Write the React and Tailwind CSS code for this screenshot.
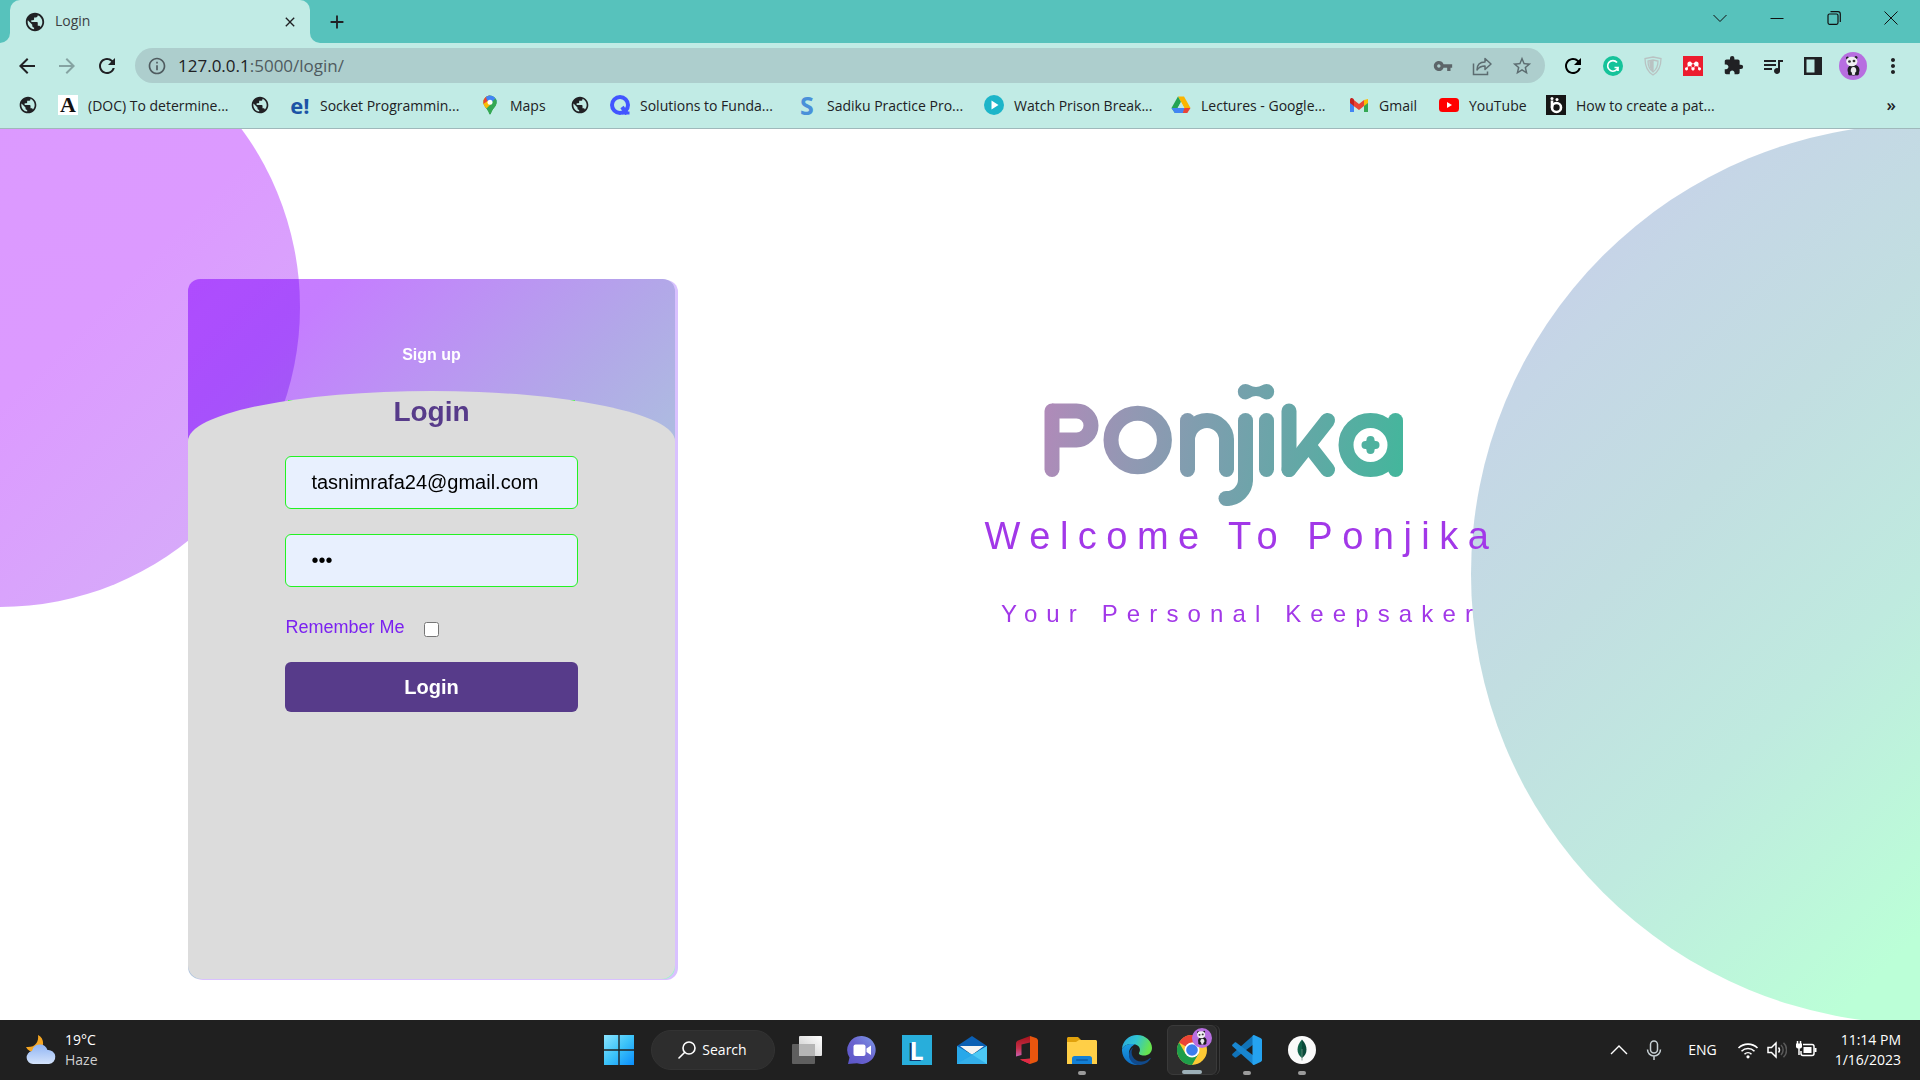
import React from "react";
import {
  MdPublic,
  MdArrowBack,
  MdArrowForward,
  MdRefresh,
  MdInfoOutline,
  MdVpnKey,
  MdStarBorder,
  MdExtension,
  MdQueueMusic,
  MdMoreVert,
  MdClose,
  MdAdd,
} from "react-icons/md";
import { SiMendeley } from "react-icons/si";

/* ---------- bookmark icons ---------- */

const Globe = () => <MdPublic className="size-[22px] text-[#202124]" />;

const LetterA = () => (
  <span className="flex size-5 items-center justify-center bg-white font-['Liberation_Serif',serif] text-[22px] leading-5 font-bold text-[#111]">A</span>
);

const Educative = () => (
  <span className="font-['Open_Sans',sans-serif] text-[22px] leading-5 font-bold text-[#1b53a5]">e!</span>
);

const MapsPin = () => (
  <svg viewBox="0 0 20 20" className="size-5">
    <defs>
      <clipPath id="pin">
        <path d="M10 0.5a6.6 6.6 0 0 0-6.6 6.7c0 4.6 4.6 6.4 5.7 11.6.2 1 1.600 1 1.800 0 1.100-5.200 5.700-7 5.700-11.600A6.600 6.600 0 0 0 10 .5z" />
      </clipPath>
    </defs>
    <g clipPath="url(#pin)">
      <rect width="20" height="20" fill="#34a853" />
      <path d="M0 0h8l3 6-7 8-4 0z" fill="#fbbc04" />
      <path d="M0 0h10l-1 5-6 5H0z" fill="#ea4335" />
      <path d="M5 0h15v4l-9 7-4-6z" fill="#4285f4" />
      <path d="M16 3l4 3-9 13-6-6z" fill="#34a853" />
      <path d="M3 9l5-3 3 3-6 6z" fill="#fbbc04" />
    </g>
    <circle cx="10" cy="7.2" r="2.5" fill="#fff" />
  </svg>
);

const Quizlet = () => (
  <svg viewBox="0 0 20 20" className="size-5" fill="none" stroke="#4255ff" strokeWidth="4">
    <circle cx="10" cy="10" r="8" />
    <path d="M12 12l5 7" />
    <path d="M12 18h7.500" strokeWidth="3" />
  </svg>
);

const LetterS = () => (
  <span className="flex w-5 justify-center font-['Open_Sans',sans-serif] text-[25px] leading-5 font-bold text-[#4a90d9]">S</span>
);

const PlayDot = () => (
  <svg viewBox="0 0 20 20" className="size-5">
    <circle cx="10" cy="10" r="10" fill="#1cb5c9" />
    <path d="M7.500 5.500v9l7-4.500z" fill="#fff" />
  </svg>
);

const Drive = () => (
  <svg viewBox="0 0 20 20" className="size-5">
    <path d="M7 1.500h6l6.500 11.500h-6.200z" fill="#fbb500" />
    <path d="M7 1.500l3 5.600L3.800 18 .5 13z" fill="#23a455" />
    <path d="M.5 13h13l-1 5H3.800z" fill="#4285f4" />
    <path d="M13.300 13h6.200l-3.200 5h-4.500z" fill="#ea4335" />
    <path d="M10 7.100L13.300 13H6.700z" fill="#c1ebe5" />
  </svg>
);

const Gmail = () => (
  <svg viewBox="0 0 20 20" className="size-5">
    <path d="M1 5v12h4V8z" fill="#4285f4" />
    <path d="M19 5v12h-4V8z" fill="#34a853" />
    <path d="M15 5l4-1v4l-4 3z" fill="#fbbc04" />
    <path d="M3 3.500l7 5.500 5-4v6l-5 4-6-4.500z" fill="#ea4335" />
    <path d="M1 4.500c0-1.500 2-2 3-1l1 1v6.500L1 8z" fill="#c5221f" />
  </svg>
);

const YouTube = () => (
  <svg viewBox="0 0 20 20" className="size-5">
    <rect y="3" width="20" height="14" rx="3.500" fill="#f00" />
    <path d="M8 7v6l5-3z" fill="#fff" />
  </svg>
);

const DarkB = () => (
  <svg viewBox="0 0 20 20" className="size-5">
    <rect width="20" height="20" fill="#161616" />
    <circle cx="10.500" cy="12.500" r="4.500" fill="none" stroke="#fff" strokeWidth="2.600" />
    <path d="M6 5.500v7" fill="none" stroke="#fff" strokeWidth="2.600" />
    <circle cx="6" cy="3.500" r="1.500" fill="#fff" />
    <circle cx="11" cy="4.500" r="1.500" fill="#fff" />
  </svg>
);

const BOOKMARKS = [
  { icon: Globe, width: "w-10" },
  { icon: LetterA, label: "(DOC) To determine...", width: "w-48" },
  { icon: Globe, width: "w-10" },
  { icon: Educative, label: "Socket Programmin...", width: "w-[190px]" },
  { icon: MapsPin, label: "Maps", width: "w-[90px]" },
  { icon: Globe, width: "w-10" },
  { icon: Quizlet, label: "Solutions to Funda...", width: "w-[187px]" },
  { icon: LetterS, label: "Sadiku Practice Pro...", width: "w-[187px]" },
  { icon: PlayDot, label: "Watch Prison Break...", width: "w-[187px]" },
  { icon: Drive, label: "Lectures - Google...", width: "w-[178px]" },
  { icon: Gmail, label: "Gmail", width: "w-[90px]" },
  { icon: YouTube, label: "YouTube", width: "w-[107px]" },
  { icon: DarkB, label: "How to create a pat...", width: "w-[190px]" },
];

/* ---------- browser chrome ---------- */

function Panda({ className }) {
  return (
    <svg viewBox="0 0 28 28" className={className}>
      <circle cx="14" cy="14" r="14" fill="#b76ee0" />
      <ellipse cx="14.500" cy="18" rx="6" ry="5.500" fill="#1d1d22" />
      <ellipse cx="14.500" cy="19" rx="2.800" ry="4" fill="#e9e9ee" />
      <circle cx="8.500" cy="6" r="1.500" fill="#1d1d22" />
      <circle cx="17" cy="5.500" r="1.500" fill="#1d1d22" />
      <ellipse cx="12.800" cy="9.500" rx="5.600" ry="4.800" fill="#efeff2" />
      <ellipse cx="10.500" cy="9.500" rx="1.400" ry="1.200" fill="#333" />
      <ellipse cx="15" cy="9" rx="1.400" ry="1.200" fill="#333" />
      <circle cx="11" cy="21.500" r="2" fill="#1d1d22" />
      <circle cx="18" cy="21.500" r="2" fill="#1d1d22" />
    </svg>
  );
}

function ShareIcon() {
  return (
    <svg viewBox="0 0 20 20" className="size-5" fill="none" stroke="#5c6c70" strokeWidth="1.500">
      <path d="M1.500 7.500v11h14v-3" />
      <path d="M5 14c0-5 3-8 8-8V2.500l6 5.500-6 5.500V10c-4 0-6 1-8 4z" strokeLinejoin="round" />
    </svg>
  );
}

function TabStrip() {
  return (
    <div className="flex h-[43px] bg-[#57c2bc]">
      <div className="w-2.5 bg-[#c1ebe5]">
        <div className="h-full rounded-br-[10px] bg-[#57c2bc]" />
      </div>
      <div className="flex w-[300px] items-center rounded-t-[10px] bg-[#c1ebe5] pr-3 pl-3.5">
        <MdPublic className="size-[22px] text-[#202124]" />
        <span className="ml-[9px] flex-1 pb-0.5 text-[14px] text-[#3c4043]">Login</span>
        <button aria-label="Close tab" className="text-[#202124]">
          <MdClose className="size-4" />
        </button>
      </div>
      <div className="w-2.5 bg-[#c1ebe5]">
        <div className="h-full rounded-bl-[10px] bg-[#57c2bc]" />
      </div>
      <button aria-label="New tab" className="ml-1.5 self-center text-[#202124]">
        <MdAdd className="size-[22px]" />
      </button>
      <div className="ml-auto flex h-9 items-center">
        <button aria-label="Search tabs" className="flex w-14 justify-center">
          <svg viewBox="0 0 14 14" className="size-3.5" fill="none" stroke="#111">
            <path d="M.5 4L7 10.500 13.500 4" />
          </svg>
        </button>
        <button aria-label="Minimize" className="flex w-[57px] justify-center">
          <svg viewBox="0 0 14 14" className="size-3.5" fill="none" stroke="#111">
            <path d="M.5 7.500h13" />
          </svg>
        </button>
        <button aria-label="Restore" className="flex w-[57px] justify-center">
          <svg viewBox="0 0 14 14" className="size-3.5" fill="none" stroke="#111" strokeWidth="1.200">
            <rect x="1" y="3" width="10" height="10.300" rx="1.500" />
            <path d="M3.500.7H11a2.300 2.300 0 0 1 2.300 2.300v8" />
          </svg>
        </button>
        <button aria-label="Close window" className="flex w-[58px] justify-center">
          <svg viewBox="0 0 14 14" className="size-3.5" fill="none" stroke="#111">
            <path d="M.5.5l13 13M13.500.5L.5 13.500" />
          </svg>
        </button>
      </div>
    </div>
  );
}

function Toolbar() {
  return (
    <div className="flex h-[45px] items-center bg-[#c1ebe5] pr-[7px] pl-[7px]">
      <button aria-label="Back" className="flex w-10 justify-center text-[#202124]">
        <MdArrowBack className="size-6" />
      </button>
      <button aria-label="Forward" className="flex w-10 justify-center text-[#85a3a2]">
        <MdArrowForward className="size-6" />
      </button>
      <button aria-label="Reload" className="flex w-10 justify-center text-[#202124]">
        <MdRefresh className="size-6" />
      </button>
      <div className="ml-2 flex h-[35px] flex-1 items-center rounded-full bg-[#adcecd] px-3">
        <MdInfoOutline className="size-5 text-[#4f5b5f]" />
        <div className="ml-[11px] flex-1 text-[17px] text-[#4f5b5f]">
          <span className="text-[#202124]">127.0.0.1</span>:5000/login/
        </div>
        <div className="flex items-center gap-[19px]">
          <MdVpnKey className="size-5 text-[#5c6569]" />
          <ShareIcon />
          <MdStarBorder className="size-[22px] text-[#5c6c70]" />
        </div>
      </div>
      <div className="ml-2 flex items-center">
        <span className="flex w-10 justify-center">
          <MdRefresh className="size-6 stroke-black text-black" />
        </span>
        <span className="flex w-10 justify-center">
          <svg viewBox="0 0 20 20" className="size-5" fill="none" stroke="#fff" strokeWidth="1.700">
            <circle cx="10" cy="10" r="10" fill="#15c39a" stroke="none" />
            <path d="M14 6.500A5.300 5.300 0 1 0 15 11.500h-3.500M15 11v4" />
          </svg>
        </span>
        <span className="flex w-10 justify-center">
          <svg viewBox="0 0 20 20" className="size-5" fill="none" stroke="#b9c2c2" strokeWidth="1.300">
            <path d="M10 1l8 1.500c0 8-2 13-8 16.500C4 15.500 2 10.500 2 2.500z" />
            <path d="M10 4l5 1c0 5-1.500 8.500-5 11-3.500-2.500-5-6-5-11z" />
            <path d="M10 5v10c-2-1.500-3-5-3-9z" fill="#b9c2c2" />
          </svg>
        </span>
        <span className="flex w-10 justify-center">
          <span className="flex size-5 items-center justify-center bg-[#ec1c2e] text-white">
            <SiMendeley className="size-4" />
          </span>
        </span>
        <span className="flex w-10 justify-center">
          <MdExtension className="size-[21px] text-[#202124]" />
        </span>
        <span className="flex w-10 justify-center">
          <MdQueueMusic className="size-6 text-[#202124]" />
        </span>
        <span className="flex w-10 justify-center">
          <svg viewBox="0 0 18 18" className="size-[18px]">
            <path d="M0 0h18v18H0zM2.500 2.500v13h8v-13z" fill="#202124" fillRule="evenodd" />
          </svg>
        </span>
        <button aria-label="Profile" className="flex w-10 justify-center">
          <Panda className="size-7" />
        </button>
        <button aria-label="Menu" className="flex w-10 justify-center text-[#202124]">
          <MdMoreVert className="size-6" />
        </button>
      </div>
    </div>
  );
}

function BookmarksBar() {
  return (
    <nav aria-label="Bookmarks" className="flex h-[41px] items-center border-b border-[#9fb8bb] bg-[#c1ebe5] pb-1.5 pl-[18px]">
      {BOOKMARKS.map(({ icon: Icon, label, width }, i) => (
        <a key={i} href="#" aria-label={label || "Bookmark"} className={"flex shrink-0 items-center gap-2.5 whitespace-nowrap " + width}>
          <span className="flex w-5 shrink-0 items-center justify-center">
            <Icon />
          </span>
          {label && <span className="text-[14px] text-[#202124]">{label}</span>}
        </a>
      ))}
      <button aria-label="More bookmarks" className="mr-6 ml-auto text-[17px] leading-5 font-semibold text-[#202124]">»</button>
    </nav>
  );
}

/* ---------- login page ---------- */

function PonjikaLogo() {
  return (
    <svg viewBox="0 0 370 130" role="img" aria-label="Ponjika" className="mr-9 h-[130px] w-[370px]">
      <defs>
        <linearGradient id="brand" gradientUnits="userSpaceOnUse" x1="5" y1="30" x2="362" y2="90">
          <stop offset="0" stopColor="#b08ab9" />
          <stop offset="0.25" stopColor="#9298b3" />
          <stop offset="0.5" stopColor="#78a0ad" />
          <stop offset="0.75" stopColor="#60a9a5" />
          <stop offset="1" stopColor="#44b69c" />
        </linearGradient>
        <clipPath id="bowl"><rect x="13" y="0" width="60" height="130" /></clipPath>
        <clipPath id="arch"><rect x="130" y="0" width="80" height="61" /></clipPath>
        <clipPath id="hook"><rect x="187" y="99" width="40" height="30" /></clipPath>
      </defs>
      <g fill="none" stroke="url(#brand)" strokeWidth="15" strokeLinecap="round">
        <line x1="13" y1="31" x2="13" y2="89.500" />
        <rect x="-30" y="31" width="82" height="29" rx="14.500" clipPath="url(#bowl)" />
        <circle cx="98.700" cy="60" r="26.700" />
        <line x1="148.500" y1="40.500" x2="148.500" y2="89.500" />
        <rect x="148.500" y="40.500" width="39" height="80" rx="19.500" clipPath="url(#arch)" />
        <line x1="187.500" y1="61" x2="187.500" y2="89.500" />
        <line x1="206.500" y1="40.500" x2="206.500" y2="99.500" />
        <rect x="168.500" y="60" width="38" height="58.500" rx="19" clipPath="url(#hook)" />
        <line x1="187" y1="118.500" x2="188" y2="118.500" />
        <line x1="227.500" y1="40.500" x2="227.500" y2="89.500" />
        <line x1="250" y1="31" x2="250" y2="89.500" />
        <line x1="250" y1="89.500" x2="288.500" y2="40.500" />
        <line x1="271" y1="67" x2="288.500" y2="89.500" />
        <circle cx="331.500" cy="65" r="24.500" />
        <line x1="356.500" y1="40.500" x2="356.500" y2="89.500" />
      </g>
      <path
        fill="url(#brand)"
        d="M206.500 4c4 0 5.500 3 10.500 3s6.500-3 10.500-3a7.700 7.700 0 0 1 0 15.400c-4 0-5.500-3.400-10.500-3.400s-6.500 3.400-10.500 3.400a7.700 7.700 0 0 1 0-15.400z"
      />
      <g fill="url(#brand)" stroke="url(#brand)" strokeWidth="8" strokeLinecap="round">
        <line x1="331.500" y1="60" x2="331.500" y2="70" />
        <line x1="326.500" y1="65" x2="336.500" y2="65" />
        <circle cx="331.500" cy="65" r="2" />
      </g>
    </svg>
  );
}

const FIELD =
  "h-[53px] w-full rounded-md border border-[#22f322] bg-[#e8f0fe] px-[25px] text-[20px] text-black outline-none";

function LoginCard() {
  return (
    <div className="relative flex min-h-[700px] w-[487px] shrink-0 flex-col rounded-xl shadow-[3px_1px_0_#d9c1ff]">
      <div className="absolute inset-0 rounded-xl bg-[linear-gradient(135deg,#cc7bff_0%,#c57dff_13%,#b2a8e8_41%,#adbde0_55%,#96f8c9_100%)] mix-blend-multiply" />
      <div className="absolute top-[121px] left-[100px] h-px w-[287px] bg-[#22f322]" />
      <button className="relative h-[112px] pt-10 text-[16px] leading-6 font-bold text-white">Sign up</button>
      <form
        onSubmit={(e) => e.preventDefault()}
        className="relative flex flex-1 flex-col items-center rounded-t-[50%_50px] rounded-b-[14px] bg-[#dcdcdc] pt-[3px]"
      >
        <h1 className="text-[28px] leading-9 font-bold text-[#573b8a]">Login</h1>
        <div className="mt-[26px] flex w-3/5 flex-col">
          <input type="email" aria-label="Email" defaultValue="tasnimrafa24@gmail.com" className={FIELD} />
          <input type="password" aria-label="Password" defaultValue="abc" className={FIELD + " mt-[25px]"} />
          <label className="mt-7 flex items-center gap-5 text-[18px] leading-6 text-[#7b22f0]">
            Remember Me
            <input type="checkbox" className="mt-1 size-[15px]" />
          </label>
          <button type="submit" className="mt-[23px] h-[50px] rounded-md bg-[#573b8a] text-[20px] font-bold text-white">
            Login
          </button>
        </div>
      </form>
    </div>
  );
}

function LoginPage() {
  return (
    <main className="relative isolate flex flex-1 items-start overflow-hidden bg-white pt-[150px] pb-10 pl-[188px] font-['Liberation_Sans',Arial,sans-serif]">
      <div className="absolute -top-[122px] -left-[300px] size-[600px] rounded-full bg-[linear-gradient(135deg,#dc98ff_0%,#dc9aff_58%,#d7a9fa_85%)]" />
      <div className="absolute -top-[5px] -right-[451px] size-[900px] rounded-full bg-[linear-gradient(135deg,#c7d0e9_10%,#c5d6e6_18%,#c2dee1_33%,#bfeadf_50%,#bbffd7_70%)]" />
      <LoginCard />
      <section className="relative mt-[101px] flex flex-1 flex-col items-center pr-28 whitespace-nowrap text-[#a238e8]">
        <PonjikaLogo />
        <h2 className="mt-1 text-[38px] leading-[44px] tracking-[0.25em]">Welcome To Ponjika</h2>
        <p className="mt-[42px] text-[24px] leading-7 tracking-[0.38em]">Your Personal Keepsaker</p>
      </section>
    </main>
  );
}

/* ---------- taskbar ---------- */

const TaskView = () => (
  <svg viewBox="0 0 30 30" className="size-[30px]">
    <defs>
      <linearGradient id="tv" x1="1" y1="0" x2="0" y2="1">
        <stop offset="0" stopColor="#fff" />
        <stop offset="1" stopColor="#c8c8c8" />
      </linearGradient>
    </defs>
    <rect x="7" y="1" width="23" height="20" rx="1" fill="url(#tv)" />
    <rect x="0" y="9" width="23" height="20" rx="1" fill="#6b6b6b" fillOpacity="0.85" />
    <rect x="7" y="9" width="16" height="12" fill="#b5b5b5" />
  </svg>
);

const Chat = () => (
  <svg viewBox="0 0 30 30" className="size-[30px]">
    <defs>
      <linearGradient id="ch" x1="1" y1="0" x2="0" y2="1">
        <stop offset="0" stopColor="#7c9ae8" />
        <stop offset="0.5" stopColor="#6a63cf" />
        <stop offset="1" stopColor="#5a55c8" />
      </linearGradient>
    </defs>
    <path d="M15 1a14 14 0 1 1-5 27.200L1 29l1.500-6.500A14 14 0 0 1 15 1z" fill="url(#ch)" />
    <rect x="6.500" y="9.500" width="12" height="11.500" rx="2" fill="#fff" />
    <path d="M19.500 13.500l4.500-3v9.500l-4.500-3z" fill="#fff" />
  </svg>
);

const LApp = () => (
  <span className="flex size-[30px] items-center justify-center bg-[#28aedb] text-[25px] font-bold text-white [text-shadow:-2px_1px_0_#12356b]">L</span>
);

const Mail = () => (
  <svg viewBox="0 0 30 30" className="size-[30px]">
    <path d="M0 11L15 1l15 10v5H0z" fill="#0a5fb4" />
    <path d="M3 11h24l-12 9z" fill="#f3f3f3" />
    <path d="M0 11l15 8.500L30 11v18H0z" fill="#28a8ea" />
    <path d="M0 29L30 11v18z" fill="#4cc9f5" />
    <path d="M0 29l15-9.500L30 29z" fill="#1b95e0" fillOpacity="0.5" />
  </svg>
);

const Office = () => (
  <svg viewBox="0 0 30 30" className="size-[30px]">
    <defs>
      <linearGradient id="of" x1="0" y1="0" x2="0" y2="1">
        <stop offset="0" stopColor="#a5121a" />
        <stop offset="0.6" stopColor="#c6304a" />
        <stop offset="1" stopColor="#c760b0" />
      </linearGradient>
    </defs>
    <path d="M18 1L6 5.500C4.800 6 4 7 4 8.500v13l5.500-1.500V9.500l8.500-2z" fill="url(#of)" />
    <path d="M18 1l6 2c1.300.5 2 1.500 2 3v18c0 1.500-.7 2.500-2 3l-6 2z" fill="#e8550e" />
    <path d="M8 24.500l10-1V29z" fill="#ef3e4a" />
    <path d="M8 24.500l10 4.500v-5z" fill="#e02a45" />
  </svg>
);

const Folder = () => (
  <svg viewBox="0 0 30 30" className="size-[30px]">
    <path d="M0 3.500C0 2.500.8 2 1.500 2H11l3 3v5H0z" fill="#e0a10c" />
    <path d="M0 7h9l3-2h16.500c.8 0 1.500.7 1.500 1.500V29H0z" fill="#ffcf47" />
    <path d="M5 29v-5.500C5 22 6 21 7.500 21h15c1.500 0 2.500 1 2.500 2.500V29z" fill="#1380d6" />
    <rect x="9" y="24.300" width="12" height="1.500" rx="0.700" fill="#0b5aa5" />
  </svg>
);

const Edge = () => (
  <svg viewBox="0 0 30 30" className="size-[30px]">
    <defs>
      <linearGradient id="e1" x1="0" y1="0" x2="1" y2="0.300">
        <stop offset="0" stopColor="#2aa6e0" />
        <stop offset="0.5" stopColor="#30c4d3" />
        <stop offset="1" stopColor="#66e34f" />
      </linearGradient>
      <linearGradient id="e2" x1="0" y1="0" x2="0" y2="1">
        <stop offset="0" stopColor="#1b9de2" />
        <stop offset="1" stopColor="#0d6cc4" />
      </linearGradient>
    </defs>
    <path d="M0 14C.5 6 7 0 15 0c9 0 15 6.500 15 13 0 5-4 7.500-8 7.500-3.500 0-5.500-1.300-5-2.500 2-3 1-7-3.500-8.500C8 8 2 10 0 14z" fill="url(#e1)" />
    <path d="M0 14c2-4 8-6 13-4.500C9 11 6.500 15 7 19.500c.5 5 4.500 9 10 10.300C8 31-.5 24 0 14z" fill="url(#e2)" />
    <path d="M11 12.500C7 19 12 27 20 26.500c3 0 5.500-1.500 8-3.500.5-.3 1 .2.600.7C26.500 27.500 22 30 17 30 11 29.500 6.500 25 7 19.500c.2-3 2-5.500 4-7z" fill="#114a8b" />
  </svg>
);

const Chrome = () => (
  <svg viewBox="0 0 30 30" className="size-[30px]">
    <circle cx="15" cy="15" r="15" fill="#fcc934" />
    <path d="M15 15L2 7.500A15 15 0 0 1 28 7.500H15z" fill="#ea4335" />
    <path d="M2 7.500A15 15 0 0 0 15 30l6.500-11.200L15 15l-6.500 3.700z" fill="#1e9e4a" />
    <circle cx="15" cy="15" r="7.500" fill="#fff" />
    <circle cx="15" cy="15" r="5.800" fill="#3b7ded" />
  </svg>
);

const VSCode = () => (
  <svg viewBox="0 0 30 30" className="size-[30px]">
    <path d="M22 1.500v7.500L4.500 22.300c-.7.500-1.500.5-2 0L.5 20.500c-.5-.5-.5-1.300 0-1.800L20.500 1z" fill="#1173b8" />
    <path d="M22 28.500V21L4.500 7.700c-.7-.5-1.500-.5-2 0L.5 9.500c-.5.500-.5 1.300 0 1.800L20.500 29z" fill="#1886d0" />
    <path d="M22 0l6.500 3c1 .5 1.500 1.200 1.500 2.300v19.400c0 1-.5 1.800-1.500 2.300L22 30c-.8 0-1.500-.5-1.500-1.500v-27C20.500.5 21.200 0 22 0z" fill="#25a3f0" />
  </svg>
);

const Mongo = () => (
  <svg viewBox="0 0 30 30" className="size-[30px]">
    <circle cx="15" cy="15" r="14" fill="#fafafa" />
    <path d="M15 4.500c-6 6.500-6 14 0 18.500z" fill="#116149" />
    <path d="M15 4.500c6 6.500 6 14 0 18.500z" fill="#0a4a3a" />
    <path d="M15 14v11.500" stroke="#6a8f7f" strokeWidth="0.800" />
  </svg>
);

const APPS = [
  { name: "Task view", icon: TaskView },
  { name: "Chat", icon: Chat },
  { name: "L", icon: LApp },
  { name: "Mail", icon: Mail },
  { name: "Office", icon: Office },
  { name: "File Explorer", icon: Folder, running: true },
  { name: "Edge", icon: Edge },
  { name: "Chrome", icon: Chrome, active: true },
  { name: "Visual Studio Code", icon: VSCode, running: true },
  { name: "MongoDB", icon: Mongo, running: true },
];

function AppButton({ name, icon: Icon, running, active }) {
  return (
    <button
      aria-label={name}
      className={
        "relative flex h-[50px] w-[50px] items-center justify-center rounded-md " +
        (active ? "border border-[#3a3a3a] bg-[#2d2d2d] shadow-[2px_0_0_#202020,3px_0_0_#3a3a3a]" : "")
      }
    >
      <Icon />
      {active && <Panda className="absolute top-0.5 right-1 size-5" />}
      {running && <span className="absolute bottom-0 h-1 w-2 rounded-full bg-[#9b9b9b]" />}
      {active && <span className="absolute bottom-0 h-1 w-5 rounded-full bg-[#9db0b8]" />}
    </button>
  );
}

function Taskbar() {
  return (
    <footer className="grid h-[60px] grid-cols-[1fr_auto_1fr] items-center bg-[#202020] text-[14px] leading-5 text-white">
      <div className="flex items-center gap-2 pl-[25px]">
        <svg viewBox="0 0 32 32" className="size-8">
          <defs>
            <linearGradient id="cl" x1="0" y1="0" x2="0" y2="1">
              <stop offset="0" stopColor="#8fb4f4" />
              <stop offset="1" stopColor="#d4e3fb" />
            </linearGradient>
          </defs>
          <path d="M13 1c7 3 7 14-1 17-5 1-9-1-11-5 9 1 13-5 12-12z" fill="#f5a623" />
          <path d="M8 30a6.500 6.500 0 0 1-1-12.900A8 8 0 0 1 22.500 16 7 7 0 0 1 24 30z" fill="url(#cl)" />
        </svg>
        <div>
          <div>19°C</div>
          <div className="text-[#cfcfcf]">Haze</div>
        </div>
      </div>

      <div className="flex items-center gap-[5px]">
        <button aria-label="Start" className="mr-0.5 flex w-[50px] justify-center">
          <svg viewBox="0 0 30 30" className="size-[30px]">
            <defs>
              <linearGradient id="wn" x1="0" y1="0" x2="1" y2="1">
                <stop offset="0" stopColor="#8be4ff" />
                <stop offset="0.5" stopColor="#3cc3f8" />
                <stop offset="1" stopColor="#0a8dfc" />
              </linearGradient>
            </defs>
            <path d="M0 0h14.300v14.300H0zM15.700 0H30v14.300H15.700zM0 15.700h14.300V30H0zM15.700 15.700H30V30H15.700z" fill="url(#wn)" />
          </svg>
        </button>
        <button className="mr-0.5 flex h-10 w-[124px] items-center justify-center gap-1.5 rounded-full border border-[#333] bg-[#2d2d2d]">
          <svg viewBox="0 0 18 18" className="size-[18px]" fill="none" stroke="#fff" strokeWidth="1.600">
            <circle cx="11" cy="7" r="6" />
            <path d="M6.800 11.300L1 17" strokeLinecap="round" />
          </svg>
          Search
        </button>
        {APPS.map((app) => (
          <AppButton key={app.name} {...app} />
        ))}
      </div>

      <div className="flex items-center justify-end pr-[19px]">
        <svg viewBox="0 0 18 18" className="size-[18px]" fill="none" stroke="#fff" strokeWidth="1.400">
          <path d="M1 13l8-8 8 8" />
        </svg>
        <svg viewBox="0 0 20 20" className="ml-4 size-5" fill="none" stroke="#c7d0d4" strokeWidth="1.500">
          <rect x="6.500" y="1" width="7" height="12" rx="3.500" />
          <path d="M3.500 9.500a6.500 6.500 0 0 0 13 0M10 16v4" />
        </svg>
        <span className="ml-6">ENG</span>
        <div className="ml-5 flex items-center gap-2">
          <svg viewBox="0 0 22 20" className="h-5 w-[22px]" fill="none" stroke="#fff" strokeWidth="1.600">
            <path d="M1.500 8a13.500 13.500 0 0 1 19 0M4.500 11.200a9.300 9.300 0 0 1 13 0M7.500 14.200a5 5 0 0 1 7 0" />
            <circle cx="11" cy="16.800" r="1.600" fill="#fff" stroke="none" />
          </svg>
          <svg viewBox="0 0 20 20" className="size-5" fill="none" stroke="#fff" strokeWidth="1.500">
            <path d="M1 7.500h3.500L9 3v14l-4.500-4.500H1z" />
            <path d="M11.500 7.500a4 4 0 0 1 0 5" />
            <path d="M14 5a7 7 0 0 1 0 10M16.500 2.800a10 10 0 0 1 0 14.400" stroke="#5a5a5a" />
          </svg>
          <svg viewBox="0 0 22 20" className="h-5 w-[22px]" fill="none" stroke="#fff" strokeWidth="1.500">
            <path d="M8 4.500h9a2 2 0 0 1 2 2v7a2 2 0 0 1-2 2H8a2 2 0 0 1-2-2V11" />
            <rect x="8.500" y="7" width="8" height="6" fill="#fff" stroke="none" />
            <path d="M20.500 8v4" strokeWidth="2" />
            <path d="M2.500 1v3M5.500 1v3M4 8v7" />
            <path d="M1 3.500h6v3a2 2 0 0 1-2 2H3a2 2 0 0 1-2-2z" fill="#fff" stroke="none" />
          </svg>
        </div>
        <div className="ml-[18px] text-right">
          <div>11:14 PM</div>
          <div>1/16/2023</div>
        </div>
      </div>
    </footer>
  );
}

export default function App() {
  return (
    <div className="flex min-h-screen flex-col font-['Open_Sans','Noto_Sans',sans-serif]">
      <header>
        <TabStrip />
        <Toolbar />
        <BookmarksBar />
      </header>
      <LoginPage />
      <Taskbar />
    </div>
  );
}
